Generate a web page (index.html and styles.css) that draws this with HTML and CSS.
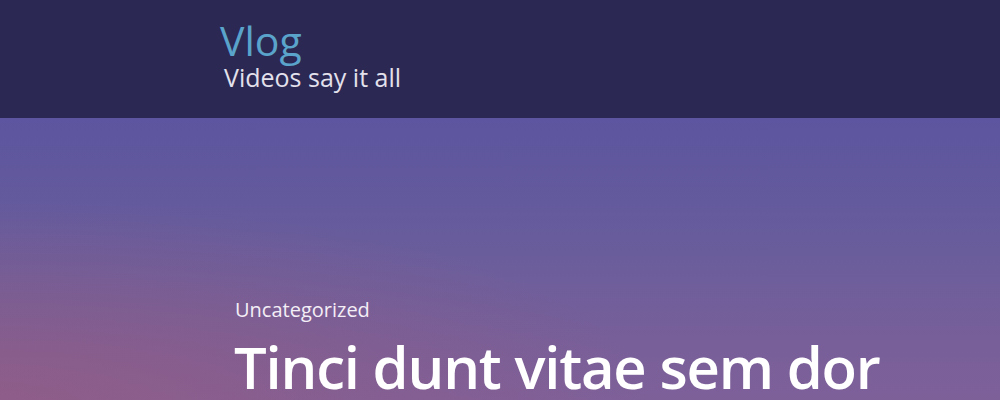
FILE: index.html
```html
<!DOCTYPE html>
<html>
<head>
<meta charset="utf-8">
<link rel="stylesheet" href="styles.css">
</head>
<body>
<header class="site-header">
  <div class="branding">
    <div class="site-title">Vlog</div>
    <div class="site-desc">Videos say it all</div>
  </div>
</header>
<section class="hero">
  <div class="hero-inner">
    <div class="cat">Uncategorized</div>
    <h1 class="post-title">Tinci dunt vitae sem dor</h1>
  </div>
</section>
</body>
</html>
```
FILE: styles.css
```css
html, body {
  margin: 0;
  padding: 0;
}
body {
  width: 1000px;
  height: 400px;
  overflow: hidden;
  font-family: "Open Sans", "Noto Sans", sans-serif;
  background: #6d5e9c;
}
.site-header {
  background: #2b2853;
  height: 118px;
  box-sizing: border-box;
  padding: 18px 0 0 220px;
}
.site-title {
  color: #5aa3cb;
  font-size: 41px;
  line-height: 44px;
  font-weight: 400;
}
.site-desc {
  color: #e3e1ec;
  font-size: 25px;
  line-height: 30px;
  margin-left: 4px;
}
.hero {
  height: 282px;
  background:
    radial-gradient(ellipse 650px 200px at 0% 100%, rgba(160, 90, 120, 0.5) 0%, rgba(160, 90, 120, 0) 100%),
    linear-gradient(180deg, #5d559f 0%, #635a9d 30%, #6d5e9b 55%, #785f99 80%, #7e6099 100%);
  box-sizing: border-box;
  padding: 179px 0 0 235px;
}
.cat {
  color: #f4eef6;
  font-size: 20px;
  line-height: 26px;
}
.post-title {
  margin: 9px 0 0 -1px;
  color: #ffffff;
  font-size: 58px;
  line-height: 70px;
  font-weight: 600;
  letter-spacing: -1.2px;
  white-space: nowrap;
}
```
